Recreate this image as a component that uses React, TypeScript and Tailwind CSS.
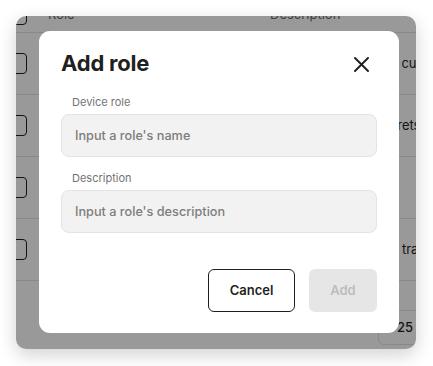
import React from "react";

const rows = [
  { role: "Admin", desc: "Full edit access to all customers" },
  { role: "Operator", desc: "Can audit, rotate secrets" },
  { role: "Viewer", desc: "Read only" },
  { role: "Trainer", desc: "Can handle all model training" },
];

function Checkbox() {
  return <div className="-ml-[10px] h-[21px] w-[21px] shrink-0 rounded-[4px] border-[1.5px] border-[#1f1f1f] bg-white" />;
}

export default function App() {
  return (
    <div className="h-[366px] w-[433px] bg-white p-4 font-['Inter',_sans-serif]">
      <div className="relative h-[333px] w-[400px] overflow-hidden rounded-[10px] bg-white shadow-[0_6px_18px_rgba(0,0,0,0.18)]">
        {/* background table */}
        <div className="-mt-[19px] flex flex-col">
          <div className="flex h-[36px] items-center border-b border-[#e5e5e5] text-[13px] text-[#6b6b6b]">
            <Checkbox />
            <div className="ml-[21px] w-[222px] shrink-0">Role</div>
            <div className="whitespace-nowrap">Description</div>
          </div>
          {rows.map((r) => (
            <div key={r.role} className="flex h-[62px] items-center border-b border-[#e5e5e5] text-[13px] text-[#1f1f1f]">
              <Checkbox />
              <div className="ml-[21px] w-[222px] shrink-0">{r.role}</div>
              <div className="shrink-0 whitespace-nowrap">{r.desc}</div>
            </div>
          ))}
          <div className="flex justify-end pt-[29px]">
            <div className="-mr-[62px] flex h-[35px] w-[100px] shrink-0 items-center rounded-[6px] border border-[#e5e5e5] pl-[18px] text-[13px] font-medium whitespace-nowrap text-[#1f1f1f]">
              25 per page
            </div>
          </div>
        </div>

        {/* overlay */}
        <div className="absolute inset-0 bg-black/40" />

        {/* modal */}
        <div className="absolute left-[23px] top-[15px] flex h-[302px] w-[360px] flex-col rounded-[11px] bg-white px-[22px] pt-[18px]">
          <div className="flex items-start justify-between">
            <h2 className="text-[22px] font-bold leading-[28px] tracking-[-0.2px] text-[#1f1f1f]">Add role</h2>
            <svg className="mr-[8px] mt-[8px]" width="15" height="15" viewBox="0 0 15 15" fill="none">
              <path d="M1 1L14 14M14 1L1 14" stroke="#1f1f1f" strokeWidth="1.9" strokeLinecap="round" />
            </svg>
          </div>

          <label className="mt-[17px] pl-[11px] text-[11px] leading-[16px] text-[#737373]">Device role</label>
          <div className="mt-[4px] flex h-[43px] items-center rounded-[8px] border border-[#e3e3e3] bg-[#f2f2f2] pl-[13px] text-[12.7px] font-medium text-[#7d7d7d]">
            Input a role's name
          </div>

          <label className="mt-[13px] pl-[11px] text-[11px] leading-[16px] text-[#737373]">Description</label>
          <div className="mt-[4px] flex h-[43px] items-center rounded-[8px] border border-[#e3e3e3] bg-[#f2f2f2] pl-[13px] text-[12.7px] font-medium text-[#7d7d7d]">
            Input a role's description
          </div>

          <div className="mt-[36px] flex justify-end gap-[14px]">
            <button className="h-[43px] w-[87px] rounded-[6px] border border-[#1f1f1f] bg-white text-[13px] font-semibold text-[#1f1f1f]">
              Cancel
            </button>
            <button className="h-[43px] w-[68px] rounded-[6px] bg-[#e6e6e6] text-[13px] font-semibold text-[#bdbdbd]">
              Add
            </button>
          </div>
        </div>
      </div>
    </div>
  );
}
